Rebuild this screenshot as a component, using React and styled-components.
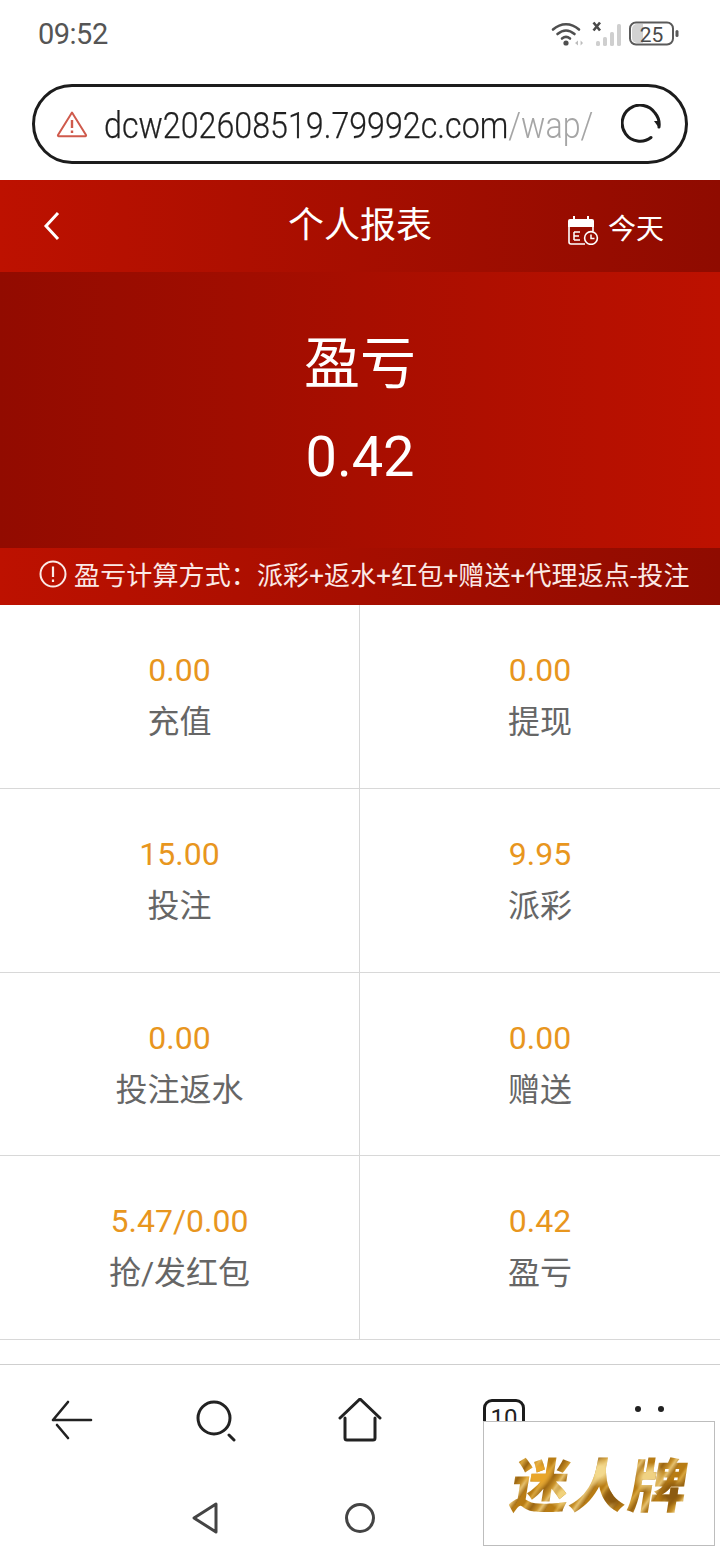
import React from "react";
import styled, { createGlobalStyle } from "styled-components";

const Global = createGlobalStyle`
  html, body { margin: 0; padding: 0; background: #fff; }
  * { box-sizing: border-box; }
  body { font-family: Roboto, "Noto Sans CJK SC", sans-serif; }
`;
const Phone = styled.div`
  position: relative; width: 720px; height: 1560px; overflow: hidden;
  display: flex; flex-direction: column; background: #fff;
`;
const StatusBar = styled.div`
  height: 68px; padding: 0 41px 0 38px; display: flex; align-items: center; justify-content: space-between;
`;
const Clock = styled.span`font-size: 29px; color: #555; line-height: 1; letter-spacing: -.5px;`;
const StatusIcons = styled.div`display: flex; gap: 5px;`;
const UrlRow = styled.div`padding: 16px 32px;`;
const UrlBar = styled.div`
  height: 80px; border: 3px solid #1c1c1c; border-radius: 40px; display: flex; align-items: center;
  padding: 0 24px 0 21px;
`;
const WarnIcon = styled.svg`flex: none;`;
const UrlText = styled.div`
  margin-left: 16px; padding-top: 3px; white-space: nowrap; font-size: 36px; color: #1f1f1f; width: 488px; flex: none;
  font-weight: 300; transform: scaleX(.895); transform-origin: left center; -webkit-text-stroke: .25px #1f1f1f;
  span { color: #a5a5a5; -webkit-text-stroke: 0; }
`;
const Reload = styled.div`margin-left: auto; display: flex; flex: none;`;
const Header = styled.header`
  height: 92px; background: linear-gradient(90deg, #bd1100, #8f0b00); color: #fff;
  display: grid; grid-template-columns: 1fr auto 1fr; align-items: center; padding: 0 56px;
`;
const BackIcon = styled.svg`margin-left: -14px;`;
const Title = styled.h1`margin: 0; padding-bottom: 1px; font-weight: 400; font-size: 36px; line-height: 1;`;
const Today = styled.div`
  justify-self: end; display: flex; align-items: center; gap: 9px; font-size: 28px; line-height: 1; padding-top: 8px;
`;
const Hero = styled.section`
  height: 276px; background: linear-gradient(90deg, #920b00, #bd1100); color: #fff;
  display: flex; flex-direction: column; align-items: center; padding-top: 62px;
`;
const HeroLabel = styled.div`font-size: 56px; line-height: 60px;`;
const HeroValue = styled.div`font-size: 56px; line-height: 60px; margin-top: 33px;`;
const Notice = styled.div`
  height: 57px; background: linear-gradient(90deg, #bd1100, #8f0b00); color: #fbe9e6;
  display: flex; align-items: center; padding: 0 0 6px 39px; gap: 7px; font-size: 26px; white-space: nowrap; letter-spacing: .13px;
`;
const Grid = styled.div`display: grid; grid-template-columns: 360px 360px;`;
const Cell = styled.div`
  height: 183.75px; border-bottom: 1px solid #d8d8d8;
  border-right: ${p => (p.$left ? "1px solid #d8d8d8" : "none")};
  display: flex; flex-direction: column; align-items: center; padding-top: 45px;
`;
const Value = styled.div`font-size: 32px; line-height: 40px; color: #e8961e;`;
const Label = styled.div`font-size: 32px; line-height: 44px; margin-top: 10px; color: #666;`;
const BrowserNav = styled.nav`
  position: absolute; left: 0; right: 0; top: 1364px; height: 96px; border-top: 1px solid #cfcfcf;
  display: grid; grid-template-columns: repeat(5, 1fr); align-items: center; justify-items: center;
  padding: 14px 0 0 0;
`;
const TabCount = styled.div`
  width: 42px; height: 42px; border: 3px solid #1c1c1c; border-radius: 9px; font-size: 24px; color: #222;
  display: flex; justify-content: center; padding-top: 3px; line-height: 1.1;
`;
const SystemNav = styled.div`
  position: absolute; left: 0; right: 0; top: 1498px; display: flex; justify-content: center; align-items: center; gap: 125px;
`;
const NavSpacer = styled.div`width: 28px;`;
const Watermark = styled.div`
  position: absolute; left: 483px; top: 1421px; width: 232px; height: 125px; background: #fff;
  border: 1px solid #bdbdbd; display: flex; align-items: center; justify-content: center;
`;
const Logo = styled.div`
  font-family: "Noto Sans CJK SC", sans-serif; font-weight: 900; font-size: 58px; line-height: 1;
  letter-spacing: 1px; transform: skewX(-9deg); padding: 0 2px 3px 0; margin-left: 6px;
  background:
    radial-gradient(circle at 14% 35%, #e9a62a 0 7px, transparent 16px),
    radial-gradient(circle at 30% 70%, #f1d27c 0 5px, transparent 14px),
    radial-gradient(circle at 48% 30%, #f3d98d 0 5px, transparent 16px),
    radial-gradient(circle at 58% 72%, #8c5a10 0 5px, transparent 14px),
    radial-gradient(circle at 76% 40%, #f0d283 0 6px, transparent 15px),
    radial-gradient(circle at 90% 65%, #8c5a10 0 6px, transparent 14px),
    repeating-linear-gradient(118deg, #b87c14 0 7px, #d9a63e 10px, #9a6410 16px, #c9922a 22px, #e6c271 25px, #a66e14 30px);
  -webkit-background-clip: text; background-clip: text; color: transparent;
`;

const cells = [
  ["0.00", "充值"], ["0.00", "提现"], ["15.00", "投注"], ["9.95", "派彩"],
  ["0.00", "投注返水"], ["0.00", "赠送"], ["5.47/0.00", "抢/发红包"], ["0.42", "盈亏"],
];

const Wifi = () => (
  <svg width="36" height="26" viewBox="0 0 36 26" fill="none" stroke="#4f4f4f" strokeWidth="2.6" strokeLinecap="round">
    <path d="M2 8.5C10 1.5 20 1.5 28 8.5" />
    <path d="M6.5 13C12 8.5 18 8.5 23.5 13" />
    <path d="M11 17.5C13.5 15.5 16.5 15.5 19 17.5" />
    <circle cx="15" cy="22" r="2.6" fill="#4f4f4f" stroke="none" />
    <path d="M24 22l3-2.4v4.8zM32 22l-2.4-2.4v4.8z" fill="#bdbdbd" stroke="none" />
  </svg>
);
const Signal = () => (
  <svg width="32" height="26" viewBox="0 0 32 26">
    <path d="M1.5 1.5l6.5 8M8 1.5l-6.5 8" stroke="#4a4a4a" strokeWidth="2.6" />
    {[[4, 20, 5], [11, 16, 9], [18, 11, 14], [25, 3, 22]].map(([x, y, h]) => (
      <rect key={x} x={x} y={y} width="4" height={h} rx="1.6" fill="#cfcfcf" />
    ))}
  </svg>
);
const Battery = () => (
  <svg width="50" height="26" viewBox="0 0 50 26">
    <rect x="1" y="1.5" width="43" height="22" rx="6" fill="#fff" stroke="#5a5a5a" strokeWidth="2" />
    <path d="M3 8a5 5 0 0 1 5-5h6v19H8a5 5 0 0 1-5-5z" fill="#d2d2d2" />
    <rect x="46.5" y="9" width="3" height="7" rx="1.5" fill="#5a5a5a" />
    <text x="22.5" y="20.5" textAnchor="middle" fontSize="21" fontFamily="Roboto" fill="#4a4a4a">25</text>
  </svg>
);

export default function App() {
  return (
    <Phone>
      <Global />
      <StatusBar>
        <Clock>09:52</Clock>
        <StatusIcons>
          <Wifi /><Signal /><Battery />
        </StatusIcons>
      </StatusBar>
      <UrlRow>
        <UrlBar>
          <WarnIcon width="32" height="28" viewBox="0 0 32 28" fill="none" stroke="#cf5a4c" strokeWidth="2">
            <path d="M16 2.5L30 25a.8.8 0 0 1-.7 1.2H2.7A.8.8 0 0 1 2 25z" strokeLinejoin="round" />
            <path d="M16 10v8M16 20.5v2.5" strokeWidth="2.4" />
          </WarnIcon>
          <UrlText>dcw202608519.79992c.com<span>/wap/</span></UrlText>
          <Reload>
            <svg width="40" height="40" viewBox="0 0 40 40" fill="none" stroke="#1c1c1c" strokeWidth="3" strokeLinecap="round">
              <path d="M30 33.5A18 18 0 1 1 34 9a18 18 0 0 1 4 14" />
              <path d="M33 17l5 7 1-7z" fill="#1c1c1c" stroke="none" />
            </svg>
          </Reload>
        </UrlBar>
      </UrlRow>
      <Header>
        <BackIcon width="22" height="34" viewBox="0 0 22 34" fill="none" stroke="#fff" strokeWidth="3">
          <path d="M16 4L4 17l12 13" />
        </BackIcon>
        <Title>个人报表</Title>
        <Today>
          <svg width="32" height="30" viewBox="0 0 32 30" fill="none">
            <path d="M1 12V6a2 2 0 0 1 2-2h22a2 2 0 0 1 2 2v6z" fill="#fff" />
            <path d="M7 1v5M21 1v5" stroke="#fff" strokeWidth="2" />
            <path d="M2 12v15a2 2 0 0 0 2 2h14M26 12v4" stroke="#fff" strokeWidth="1.6" />
            <path d="M7 17h6M7 21h5M7 25h6M7 17v8" stroke="#fff" strokeWidth="1.5" />
            <circle cx="24" cy="23" r="6.4" stroke="#fff" strokeWidth="1.6" />
            <path d="M24 19.5V23.5h3.5" stroke="#fff" strokeWidth="1.5" />
          </svg>
          今天
        </Today>
      </Header>
      <Hero>
        <HeroLabel>盈亏</HeroLabel>
        <HeroValue>0.42</HeroValue>
      </Hero>
      <Notice>
        <svg width="28" height="28" viewBox="0 0 28 28" fill="none" stroke="#fbe9e6" strokeWidth="2">
          <circle cx="14" cy="14" r="12.5" />
          <path d="M14 6.5V17M14 19.5v2.5" strokeWidth="2.2" />
        </svg>
        <span>盈亏计算方式：派彩+返水+红包+赠送+代理返点-投注</span>
      </Notice>
      <Grid>
        {cells.map(([v, l], i) => (
          <Cell key={i} $left={i % 2 === 0}>
            <Value>{v}</Value>
            <Label>{l}</Label>
          </Cell>
        ))}
      </Grid>
      <BrowserNav>
        <svg width="44" height="40" viewBox="0 0 44 40" fill="none" stroke="#222" strokeWidth="2.6" strokeLinecap="round">
          <path d="M3 20h38M3 20L18 2M7 25L18 38" />
        </svg>
        <svg width="44" height="44" viewBox="0 0 44 44" fill="none" stroke="#222" strokeWidth="3" strokeLinecap="round">
          <circle cx="20" cy="20" r="16" />
          <path d="M35 37l5 5" />
        </svg>
        <svg width="44" height="44" viewBox="0 0 44 44" fill="none" stroke="#222" strokeWidth="3" strokeLinecap="round" strokeLinejoin="round">
          <path d="M2 20L22 1l20 19" />
          <path d="M7 20v20a2 2 0 0 0 2 2h26a2 2 0 0 0 2-2V20" />
        </svg>
        <TabCount>10</TabCount>
        <svg width="36" height="44" viewBox="0 0 36 44" fill="#222">
          <circle cx="8" cy="11" r="3" /><circle cx="31" cy="11" r="3" />
        </svg>
      </BrowserNav>
      <SystemNav>
        <svg width="28" height="34" viewBox="0 0 28 34" fill="none" stroke="#444" strokeWidth="3" strokeLinejoin="round">
          <path d="M25 3v28L3 17z" />
        </svg>
        <svg width="32" height="40" viewBox="0 0 32 40" fill="none" stroke="#444" strokeWidth="3">
          <circle cx="16" cy="20" r="13.5" />
        </svg>
        <NavSpacer />
      </SystemNav>
      <Watermark><Logo>迷人牌</Logo></Watermark>
    </Phone>
  );
}
